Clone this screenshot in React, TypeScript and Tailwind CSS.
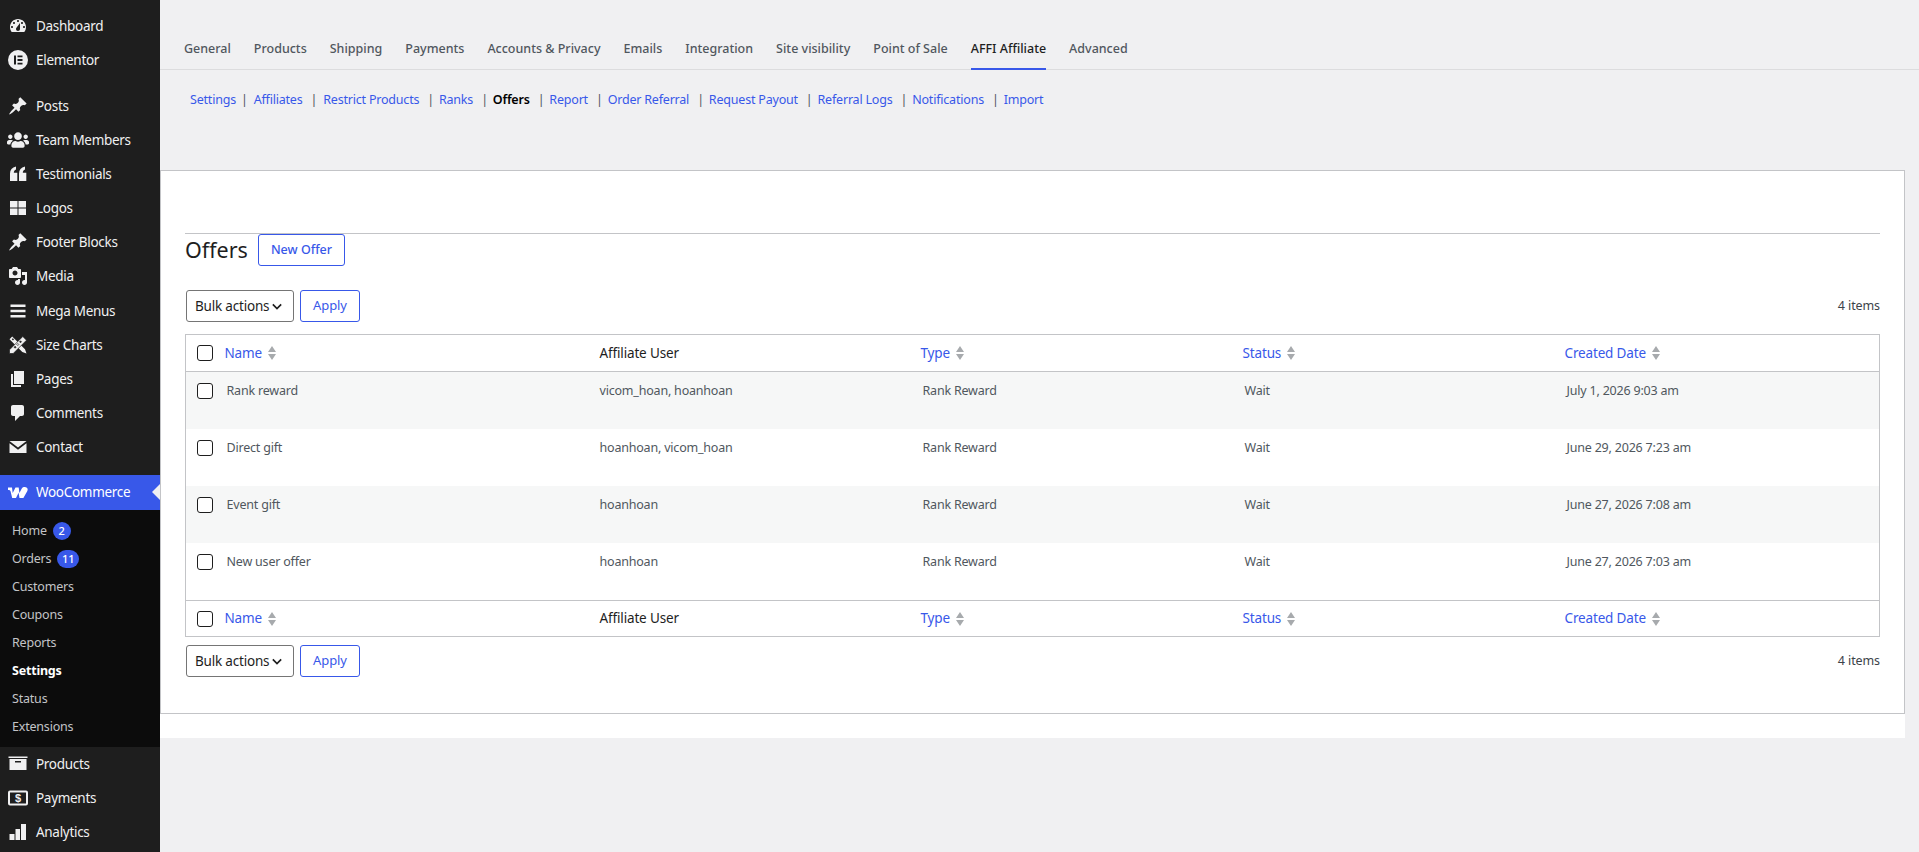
import React from "react";
import { FaUsers } from "react-icons/fa";

const Svg = ({ children }: { children: React.ReactNode }) => (
  <svg viewBox="0 0 20 20" className="w-5 h-5 fill-[#f0f0f1]">{children}</svg>
);

const Pin = () => (
  <Svg>
    <path d="M10.440 3.020l1.820-1.820 6.360 6.350-1.830 1.820c-1.050-.68-2.480-.57-3.410.36l-.75.75c-.92.93-1.040 2.350-.35 3.410l-1.830 1.820-2.410-2.410-2.800 2.790c-.42.42-3.380 2.710-3.800 2.290s1.860-3.390 2.280-3.810l2.790-2.790L4.100 9.360l1.830-1.820c1.050.69 2.480.57 3.400-.36l.75-.75c.93-.92 1.050-2.350.36-3.410z" />
  </Svg>
);

const icons: Record<string, React.ReactNode> = {
  Dashboard: (
    <Svg>
      <path fillRule="evenodd" d="M3.760 16h12.480c1.100-1.370 1.760-3.110 1.760-5 0-4.420-3.580-8-8-8s-8 3.580-8 8c0 1.890.66 3.630 1.760 5zM10 4c.55 0 1 .45 1 1s-.45 1-1 1-1-.45-1-1 .45-1 1-1zM6 6c.55 0 1 .45 1 1s-.45 1-1 1-1-.45-1-1 .45-1 1-1zm8 0c.55 0 1 .45 1 1s-.45 1-1 1-1-.45-1-1 .45-1 1-1zm-5.370 5.550L12 7v6c0 1.100-.9 2-2 2s-2-.9-2-2c0-.57.24-1.080.63-1.450zM4 10c.55 0 1 .45 1 1s-.45 1-1 1-1-.45-1-1 .45-1 1-1zm12 0c.55 0 1 .45 1 1s-.45 1-1 1-1-.45-1-1 .45-1 1-1z" />
    </Svg>
  ),
  Elementor: (
    <svg viewBox="0 0 20 20" className="w-5 h-5 fill-[#f0f0f1]">
      <path fillRule="evenodd" d="M10 0a10 10 0 1 0 0 20 10 10 0 0 0 0-20zM6 5.500h2v9H6zM9.500 5.500H14.500v1.800h-5zM9.500 9.100h5v1.800h-5zM9.500 12.700h5v1.800h-5z" />
    </svg>
  ),
  Posts: <Pin />,
  "Team Members": <FaUsers className="w-[22px] h-[22px] -ml-[1px] text-[#f0f0f1]" />,
  Testimonials: (
    <Svg>
      <path d="M2 17V9.500C2 6 4 3.500 8 2.500v3C6.600 6 5.800 7.200 5.800 8.800H9.300V17zM11 17V9.500c0-3.500 2-6 6-7v3c-1.400.5-2.200 1.700-2.200 3.300h3.500V17z" />
    </Svg>
  ),
  Logos: (
    <Svg>
      <path d="M2 3h7.500v6.500H2zM10.500 3H18v6.500h-7.500zM2 10.500h7.500V17H2zM10.500 10.500H18V17h-7.500z" />
    </Svg>
  ),
  "Footer Blocks": <Pin />,
  Media: (
    <Svg>
      <path fillRule="evenodd" d="M13 11V4c0-.55-.45-1-1-1h-1.670L9 1H5L3.670 3H2c-.55 0-1 .45-1 1v7c0 .55.45 1 1 1h10c.55 0 1-.45 1-1zM7 4.500c1.380 0 2.500 1.120 2.500 2.500S8.380 9.500 7 9.500 4.500 8.380 4.500 7 5.620 4.500 7 4.500zM14 6h5v10.500c0 1.380-1.120 2.500-2.500 2.500S14 17.880 14 16.500s1.120-2.500 2.500-2.500c.17 0 .34.020.5.050V9h-3V6zm-4 8.050V13h2v3.500c0 1.380-1.120 2.500-2.500 2.500S7 17.880 7 16.500 8.120 14 9.500 14c.17 0 .34.020.5.050z" />
    </Svg>
  ),
  "Mega Menus": (
    <Svg>
      <path d="M2.500 3.500h15v2.500h-15zM2.500 8.800h15v2.500h-15zM2.500 14h15v2.500h-15z" />
    </Svg>
  ),
  "Size Charts": (
    <Svg>
      <path fillRule="evenodd" d="M4.200 1.500L1.500 4.200l12.800 12.800 4.200 1.500-1.500-4.200zM5 5.500l-1.200-1.200 1-1 1.200 1z" />
      <path fillRule="evenodd" d="M14.800 1.500L1.500 14.800V18.500h3.700L18.500 5.200zM12.500 5.800l1 1-1 1-1-1zM9.800 8.500l1 1-1 1-1-1zM7.100 11.200l1 1-1 1-1-1z" stroke="#1e1e1e" strokeWidth="0.700" />
    </Svg>
  ),
  Pages: (
    <Svg>
      <path d="M6 15V2h10v13H6zm-1 1h8v2H3V5h2v11z" />
    </Svg>
  ),
  Comments: (
    <Svg>
      <path d="M5 2h9c1.100 0 2 .9 2 2v7c0 1.100-.9 2-2 2h-2l-5 5v-5H5c-1.100 0-2-.9-2-2V4c0-1.100.9-2 2-2z" />
    </Svg>
  ),
  Contact: (
    <Svg>
      <path d="M1.500 4h17L10 10.500zM1.500 6.300L10 12.800l8.500-6.500V16h-17z" />
    </Svg>
  ),
  Products: (
    <Svg>
      <path fillRule="evenodd" d="M.5 2.500h19v1.500H.5zM1.500 5h17v11h-17zM7 7v1.500h6V7z" />
    </Svg>
  ),
  Payments: (
    <svg viewBox="0 0 20 20" className="w-5 h-5">
      <rect x="1" y="3.500" width="18" height="13" rx="1" fill="none" stroke="#f0f0f1" strokeWidth="2" />
      <text x="10" y="14.300" textAnchor="middle" fontSize="11" fontWeight="700" fill="#f0f0f1" fontFamily="Liberation Sans, sans-serif">$</text>
    </svg>
  ),
  Analytics: (
    <Svg>
      <path d="M1.500 12h5v6h-5zM7.500 7h4.500v11H7.500zM13 2h5v16h-5z" />
    </Svg>
  ),
};

const menuTop = ["Dashboard", "Elementor"];
const menuMid = ["Posts", "Team Members", "Testimonials", "Logos", "Footer Blocks", "Media"];
const menuMid2 = ["Mega Menus", "Size Charts", "Pages", "Comments", "Contact"];
const menuEnd = ["Products", "Payments", "Analytics"];
const subs: { label: string; badge?: string; active?: boolean }[] = [
  { label: "Home", badge: "2" },
  { label: "Orders", badge: "11" },
  { label: "Customers" },
  { label: "Coupons" },
  { label: "Reports" },
  { label: "Settings", active: true },
  { label: "Status" },
  { label: "Extensions" },
];
const tabs = ["General", "Products", "Shipping", "Payments", "Accounts & Privacy", "Emails", "Integration", "Site visibility", "Point of Sale", "AFFI Affiliate", "Advanced"];
const links = ["Settings", "Affiliates", "Restrict Products", "Ranks", "Offers", "Report", "Order Referral", "Request Payout", "Referral Logs", "Notifications", "Import"];
const rows = [
  ["Rank reward", "vicom_hoan, hoanhoan", "July 1, 2026 9:03 am"],
  ["Direct gift", "hoanhoan, vicom_hoan", "June 29, 2026 7:23 am"],
  ["Event gift", "hoanhoan", "June 27, 2026 7:08 am"],
  ["New user offer", "hoanhoan", "June 27, 2026 7:03 am"],
];

const MenuItem = ({ label }: { label: string }) => (
  <a className="flex items-center h-[34px] text-[#f0f0f1] text-[13.5px] tracking-[-0.3px]">
    <span className="w-[36px] pl-[8px] flex items-center shrink-0">{icons[label]}</span>
    <span className="pt-[1px]">{label}</span>
  </a>
);

const Sort = () => (
  <svg viewBox="0 0 8 14" className="w-[8px] h-[14px] ml-[6px] fill-[#a7aaad] shrink-0">
    <path d="M4 0L8 6H0zM4 14L0 8H8z" />
  </svg>
);

const Check = () => <span className="block w-4 h-4 border border-[#1e1e1e] rounded-[3px] bg-white" />;

const Bulk = () => (
  <div className="flex items-center gap-[6px]">
    <div className="w-[108px] h-[32px] border border-[#757575] rounded-[3px] bg-white flex items-center pl-[8px] text-[13.5px] tracking-[-0.2px] text-[#1e1e1e]">
      <span>Bulk actions</span>
      <svg viewBox="0 0 12 8" className="w-[10px] h-[7px] ml-[3px] shrink-0">
        <path d="M1 1.500l5 5 5-5" fill="none" stroke="#1e1e1e" strokeWidth="2" />
      </svg>
    </div>
    <div className="w-[60px] h-[32px] border border-[#3858e9] rounded-[3px] flex items-center justify-center text-[13px] tracking-[-0.1px] text-[#3858e9]">Apply</div>
  </div>
);

const HeadCell = ({ t }: { t: string }) => (
  <th className="text-left font-normal align-middle">
    <span className="flex items-center text-[#3858e9] text-[13.500px] tracking-[-0.15px]">{t}<Sort /></span>
  </th>
);

const Head = ({ bottom }: { bottom?: boolean }) => (
  <tr className={bottom ? "h-[36px] border-t border-[#c3c4c7]" : "h-[37px] border-b border-[#c3c4c7]"}>
    <th className="pl-[11px] align-middle font-normal"><Check /></th>
    <HeadCell t="Name" />
    <th className="text-left font-normal align-middle text-[13.500px] tracking-[-0.15px] text-[#1e1e1e]">Affiliate User</th>
    <HeadCell t="Type" />
    <HeadCell t="Status" />
    <HeadCell t="Created Date" />
  </tr>
);

export default function App() {
  return (
    <div className="flex h-[852px] overflow-hidden bg-[#f0f0f2] font-['Noto_Sans','Open_Sans',sans-serif]">
      <aside className="w-[160px] shrink-0 bg-[#1e1e1e] flex flex-col pt-[9px]">
        {menuTop.map((m) => <MenuItem key={m} label={m} />)}
        <div className="h-[12px]" />
        {menuMid.map((m) => <MenuItem key={m} label={m} />)}
        <div className="h-[1px]" />
        {menuMid2.map((m) => <MenuItem key={m} label={m} />)}
        <div className="h-[11px]" />
        <div className="relative flex items-center h-[35px] bg-[#3858e9] text-white text-[13.500px] tracking-[-0.3px]">
          <span className="w-[36px] pl-[8px] flex items-center">
            <svg viewBox="0 0 20 11" className="w-[20px] h-[11px] fill-white">
              <path d="M0 .5h4l.7 5.500L7.500.5h3.200l.7 5.500L13.800 1.500C14.500.4 15.500 0 16.700 0 19 0 20.500 1.800 19.200 4.200L15.400 11h-3.900l-.9-5.200L8 11H4.200L2.600 4.500C2.300 3.300 1.500 3 0 3z" />
            </svg>
          </span>
          <span>WooCommerce</span>
          <span className="absolute right-0 top-[9px] w-0 h-0 border-y-[8px] border-y-transparent border-r-[8px] border-r-[#f0f0f2]" />
        </div>
        <div className="bg-[#0c0c0c] pt-[7px] pb-[6px] flex flex-col">
          {subs.map((s) => (
            <div key={s.label} className={`h-[28px] flex items-center pl-[12px] text-[12.500px] tracking-[-0.2px] ${s.active ? "text-white font-bold" : "text-[#c3c4c7]"}`}>
              {s.label}
              {s.badge && (
                <span className={`ml-[6px] h-[18px] rounded-full bg-[#3858e9] text-white text-[11px] tracking-normal font-medium flex items-center justify-center ${s.badge.length > 1 ? "w-[22px]" : "w-[18px]"}`}>{s.badge}</span>
              )}
            </div>
          ))}
        </div>
        {menuEnd.map((m) => <MenuItem key={m} label={m} />)}
      </aside>
      <main className="flex-1 min-w-0 flex flex-col">
        <nav className="h-[70px] border-b border-[#dcdcde] flex items-end pl-[24px] gap-[23px] text-[12.500px] font-medium text-[#50575e] shrink-0">
          {tabs.map((t) => (
            <span key={t} className={`h-[43px] pt-[4px] flex items-center ${t === "AFFI Affiliate" ? "text-[#1e1e1e] border-b-[2px] border-[#3858e9] -mb-[1px]" : ""}`}>{t}</span>
          ))}
        </nav>
        <div className="h-[100px] shrink-0 pt-[19px] pl-[30px] flex items-start text-[12.500px] tracking-[-0.2px] leading-[22px]">
          {links.map((l, i) => (
            <span key={l} className="flex">
              <span className={l === "Offers" ? "text-black font-semibold" : "text-[#3858e9]"}>{l}</span>
              {i < links.length - 1 && <span className={`text-[#50575e] ${i < 2 ? "mr-[6px]" : "mr-[5px]"} ${i === 0 ? "ml-[5px]" : "ml-[8px]"}`}>|</span>}
            </span>
          ))}
        </div>
        <div className="w-[1745px] h-[568px] bg-white shrink-0 flex flex-col">
          <section className="h-[544px] border border-[#c3c4c7] px-[24px] pt-[62px] flex flex-col">
            <div className="border-t border-[#c3c4c7] h-[57px] flex items-start">
              <h1 className="w-[62px] text-[21.500px] leading-[32px] text-[#1e1e1e] whitespace-nowrap">Offers</h1>
              <div className="ml-[11px] w-[87px] h-[32px] pt-[1px] border border-[#3858e9] rounded-[3px] flex items-center justify-center text-[12.500px] font-medium text-[#3858e9]">New Offer</div>
            </div>
            <div className="flex items-center justify-between h-[32px] pl-[1px]">
              <Bulk />
              <span className="text-[12.500px] tracking-[-0.1px] text-[#3c434a]">4 items</span>
            </div>
            <table className="w-full mt-[12px] border border-[#c3c4c7] table-fixed border-collapse text-[12.500px] tracking-[-0.2px] text-[#50575e]">
              <colgroup>
                <col className="w-[39px]" />
                <col className="w-[375px]" />
                <col className="w-[321px]" />
                <col className="w-[322px]" />
                <col className="w-[322px]" />
                <col />
              </colgroup>
              <thead><Head /></thead>
              <tbody>
                {rows.map((r, i) => (
                  <tr key={r[0]} className={`align-top ${i === 3 ? "h-[58px]" : "h-[57px]"} ${i % 2 === 0 ? "bg-[#f6f7f7]" : "bg-white"}`}>
                    <td className="pl-[11px] pt-[11px]"><Check /></td>
                    <td className="pl-[2px] pt-[10px]">{r[0]}</td>
                    <td className="pt-[10px]">{r[1]}</td>
                    <td className="pl-[2px] pt-[10px]">Rank Reward</td>
                    <td className="pl-[2px] pt-[10px]">Wait</td>
                    <td className="pl-[2px] pt-[10px]">{r[2]}</td>
                  </tr>
                ))}
              </tbody>
              <tfoot><Head bottom /></tfoot>
            </table>
            <div className="flex items-center justify-between h-[32px] mt-[8px] pl-[1px]">
              <Bulk />
              <span className="text-[12.500px] tracking-[-0.1px] text-[#3c434a]">4 items</span>
            </div>
          </section>
        </div>
      </main>
    </div>
  );
}
